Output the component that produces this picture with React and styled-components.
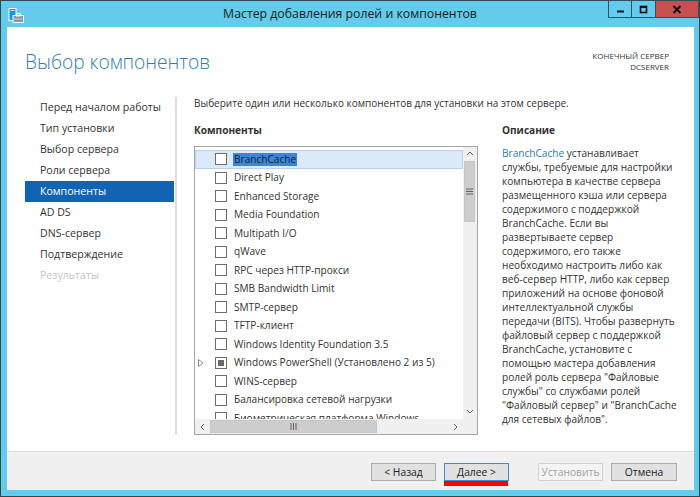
import React from 'react'
import styled, { createGlobalStyle } from 'styled-components'

const GlobalStyle = createGlobalStyle`
  html, body {
    margin: 0;
    padding: 0;
    background: #ffffff;
  }
  body {
    font-family: "Open Sans", "Noto Sans", sans-serif;
    color: #333;
  }
`

const Window = styled.div`
  width: 700px;
  height: 497px;
  box-sizing: border-box;
  border: 1px solid #34474f;
  background: #63cbeb;
  display: flex;
  flex-direction: column;
`

const TitleBar = styled.div`
  height: 26px;
  display: grid;
  grid-template-columns: 1fr auto 1fr;
  align-items: start;
`

const AppIcon = styled.div`
  justify-self: start;
  margin: 5px 0 0 7px;
  width: 16px;
  height: 15px;
`

const Title = styled.div`
  font-size: 12.3px;
  line-height: 26px;
  color: #1c1c1c;
  white-space: nowrap;
`

const Controls = styled.div`
  justify-self: end;
  display: flex;
  margin-top: -1px;
`

const ControlButton = styled.div`
  width: ${p => p.$w}px;
  height: 18px;
  box-sizing: border-box;
  border: 1px solid #35505d;
  border-left-width: ${p => (p.$first ? 1 : 0)}px;
  background: ${p => (p.$close ? '#c75050' : '#63cbeb')};
  display: flex;
  align-items: center;
  justify-content: center;
`

const Client = styled.div`
  flex: 1;
  margin: 0 5px 6px 6px;
  background: #ffffff;
  display: flex;
  flex-direction: column;
`

const Header = styled.div`
  height: 70px;
  box-sizing: border-box;
  padding: 22px 25px 0 18px;
  display: flex;
  justify-content: space-between;
  align-items: flex-start;
`

const Heading = styled.h1`
  margin: 0;
  font-size: 19.2px;
  line-height: 26px;
  font-weight: 300;
  color: #2f7db0;
`

const ServerInfo = styled.div`
  text-align: right;
  font-size: 8px;
  line-height: 11px;
  color: #333;
  margin-top: 1px;
`

const Body = styled.div`
  height: 338px;
  display: flex;
  margin-bottom: 16px;
`

const Nav = styled.ul`
  list-style: none;
  margin: 0 0 0 18px;
  padding: 0;
  width: 149px;
`

const NavItem = styled.li`
  height: 21px;
  line-height: 21px;
  padding-left: 15px;
  font-size: 10.6px;
  white-space: nowrap;
  color: ${p => (p.$active ? '#ffffff' : p.$disabled ? '#c4c4c4' : '#333')};
  background: ${p => (p.$active ? '#1064b3' : 'transparent')};
`

const Divider = styled.div`
  width: 2px;
  margin-left: 1px;
  background: #dcdcdc;
`

const Main = styled.div`
  margin-left: 17px;
  display: flex;
  flex-direction: column;
`

const Intro = styled.div`
  font-size: 10px;
  line-height: 12px;
  white-space: nowrap;
`

const Columns = styled.div`
  margin-top: 14px;
  display: flex;
  gap: 24px;
`

const Column = styled.div`
  width: ${p => p.$w}px;
  display: flex;
  flex-direction: column;
`

const SectionTitle = styled.div`
  font-size: 10.1px;
  font-weight: 700;
  line-height: 14px;
  margin-bottom: 9px;
  color: #333;
`

const ListBox = styled.div`
  height: 289px;
  box-sizing: border-box;
  border: 1px solid #a6a6a6;
  display: grid;
  grid-template-columns: 1fr 14px;
  grid-template-rows: 1fr 15px;
`

const Rows = styled.div`
  overflow: hidden;
  padding-top: 3px;
`

const Row = styled.div`
  height: 18.5px;
  display: flex;
  align-items: center;
  font-size: 10.1px;
  white-space: nowrap;
  color: #333;
  background: ${p => (p.$selected ? '#dbe9fa' : 'transparent')};
  box-shadow: ${p => (p.$selected ? 'inset 0 0 0 1px #b5d0f0' : 'none')};
`

const Expander = styled.div`
  width: 20px;
  height: 100%;
  display: flex;
  align-items: center;
  padding-left: 3px;
  box-sizing: border-box;
`

const Check = styled.div`
  width: 12px;
  height: 12px;
  box-sizing: border-box;
  border: 1px solid #6d6d6d;
  background: #fff;
  margin-right: 6px;
  display: flex;
  align-items: center;
  justify-content: center;
  &::after {
    content: '';
    display: ${p => (p.$partial ? 'block' : 'none')};
    width: 6px;
    height: 6px;
    background: #6a6a6a;
  }
`

const Label = styled.span`
  padding: 0 1px;
  line-height: 13px;
  background: ${p => (p.$focus ? '#3b86d6' : 'transparent')};
  color: ${p => (p.$focus ? '#0f2240' : 'inherit')};
`

const VScroll = styled.div`
  background: #f0f0f0;
  display: flex;
  flex-direction: column;
`

const HScroll = styled.div`
  background: #f0f0f0;
  display: flex;
`

const Corner = styled.div`
  background: #f0f0f0;
`

const Arrow = styled.div`
  width: ${p => (p.$h ? 15 : 14)}px;
  height: ${p => (p.$h ? 15 : 14)}px;
  flex: none;
  display: flex;
  align-items: center;
  justify-content: center;
`

const Track = styled.div`
  flex: 1;
  display: flex;
  flex-direction: ${p => (p.$h ? 'row' : 'column')};
`

const Thumb = styled.div`
  ${p => (p.$h ? 'width: 167px; height: 13px; margin-top: 1px;' : 'height: 61px; width: 11px; margin-left: 1px;')}
  background: #cdcdcd;
  box-sizing: border-box;
  border: 1px solid #c6c6c6;
  display: flex;
  align-items: center;
  justify-content: center;
`

const Description = styled.div`
  font-size: 10.1px;
  line-height: 14px;
  color: #333;
  white-space: nowrap;
`

const Link = styled.span`
  color: #2a7cbf;
`

const Footer = styled.div`
  flex: 1;
  border-top: 1px solid #dfdfdf;
  background: #f0f0f0;
  display: flex;
  justify-content: flex-end;
  align-items: flex-start;
  padding: 11px 17px 0 0;
  gap: 8px;
`

const Button = styled.div`
  position: relative;
  width: ${p => p.$w || 65}px;
  height: 18px;
  box-sizing: border-box;
  margin-left: ${p => p.$gap || 0}px;
  border: 1px solid ${p => (p.$default ? '#3c8ad8' : p.$disabled ? '#d3d3d3' : '#adadad')};
  background: ${p => (p.$disabled ? '#f4f4f4' : '#e1e1e1')};
  color: ${p => (p.$disabled ? '#a3a3a3' : '#222')};
  font-size: 10.3px;
  line-height: 16px;
  text-align: center;
  white-space: nowrap;
`

const Underline = styled.div`
  position: absolute;
  left: -1px;
  right: 0;
  top: calc(100% + 1px);
  height: 5px;
  background: #ff0000;
`

const components = [
  'BranchCache',
  'Direct Play',
  'Enhanced Storage',
  'Media Foundation',
  'Multipath I/O',
  'qWave',
  'RPC через HTTP-прокси',
  'SMB Bandwidth Limit',
  'SMTP-сервер',
  'TFTP-клиент',
  'Windows Identity Foundation 3.5',
  'Windows PowerShell (Установлено 2 из 5)',
  'WINS-сервер',
  'Балансировка сетевой нагрузки',
  'Биометрическая платформа Windows',
]

const steps = [
  'Перед началом работы',
  'Тип установки',
  'Выбор сервера',
  'Роли сервера',
  'Компоненты',
  'AD DS',
  'DNS-сервер',
  'Подтверждение',
  'Результаты',
]

const descLines = [
  'службы, требуемые для настройки',
  'компьютера в качестве сервера',
  'размещенного кэша или сервера',
  'содержимого с поддержкой',
  'BranchCache. Если вы',
  'развертываете сервер',
  'содержимого, его также',
  'необходимо настроить либо как',
  'веб-сервер HTTP, либо как сервер',
  'приложений на основе фоновой',
  'интеллектуальной службы',
  'передачи (BITS). Чтобы развернуть',
  'файловый сервер с поддержкой',
  'BranchCache, установите с',
  'помощью мастера добавления',
  'ролей роль сервера "Файловые',
  'службы" со службами ролей',
  '"Файловый сервер" и "BranchCache',
  'для сетевых файлов".',
]

const Chevron = ({ dir }) => {
  const paths = {
    up: 'M1 5 L4 2 L7 5',
    down: 'M1 2 L4 5 L7 2',
    left: 'M5 1 L2 4 L5 7',
    right: 'M2 1 L5 4 L2 7',
  }
  return (
    <svg width="8" height="8" viewBox="0 0 8 8">
      <path d={paths[dir]} fill="none" stroke="#606060" strokeWidth="1" />
    </svg>
  )
}

const Grip = ({ h }) =>
  h ? (
    <svg width="7" height="7" viewBox="0 0 7 7">
      <path d="M1 0V7M3.5 0V7M6 0V7" stroke="#606060" strokeWidth="1" />
    </svg>
  ) : (
    <svg width="7" height="7" viewBox="0 0 7 7">
      <path d="M0 1H7M0 3.5H7M0 6H7" stroke="#606060" strokeWidth="1" />
    </svg>
  )

export default function App() {
  return (
    <>
      <GlobalStyle />
      <Window>
        <TitleBar>
          <AppIcon>
            <svg width="16" height="15" viewBox="0 0 16 15">
              <rect x="1" y="0.5" width="7" height="12" fill="#1e8fd8" stroke="#ffffff" strokeWidth="1" />
              <rect x="2.5" y="2" width="4" height="1" fill="#bfe4f7" />
              <rect x="5" y="7.5" width="10.5" height="7" fill="#8597a6" stroke="#ffffff" strokeWidth="1" />
              <rect x="8.5" y="5.5" width="3.5" height="2.5" fill="none" stroke="#ffffff" strokeWidth="1" />
              <rect x="6" y="10.5" width="8.5" height="1" fill="#c7d1da" />
            </svg>
          </AppIcon>
          <Title>Мастер добавления ролей и компонентов</Title>
          <Controls>
            <ControlButton $w={24} $first>
              <svg width="9" height="9" viewBox="0 0 9 9">
                <rect x="1" y="5.5" width="7" height="2" fill="#111" />
              </svg>
            </ControlButton>
            <ControlButton $w={24}>
              <svg width="9" height="9" viewBox="0 0 9 9">
                <rect x="1.5" y="1.5" width="6" height="6" fill="none" stroke="#111" strokeWidth="1.6" />
                <rect x="1" y="1" width="7" height="2" fill="#111" />
              </svg>
            </ControlButton>
            <ControlButton $w={43} $close>
              <svg width="10" height="9" viewBox="0 0 10 9">
                <path d="M1.5 1 L8.5 8 M8.5 1 L1.5 8" stroke="#111" strokeWidth="2" />
              </svg>
            </ControlButton>
          </Controls>
        </TitleBar>

        <Client>
          <Header>
            <Heading>Выбор компонентов</Heading>
            <ServerInfo>
              КОНЕЧНЫЙ СЕРВЕР
              <br />
              DCSERVER
            </ServerInfo>
          </Header>

          <Body>
            <Nav>
              {steps.map((s, i) => (
                <NavItem key={s} $active={i === 4} $disabled={i === 8}>
                  {s}
                </NavItem>
              ))}
            </Nav>
            <Divider />
            <Main>
              <Intro>Выберите один или несколько компонентов для установки на этом сервере.</Intro>
              <Columns>
                <Column $w={284}>
                  <SectionTitle>Компоненты</SectionTitle>
                  <ListBox>
                    <Rows>
                      {components.map((c, i) => (
                        <Row key={c} $selected={i === 0}>
                          <Expander>
                            {i === 11 && (
                              <svg width="6" height="8" viewBox="0 0 6 8">
                                <path d="M0.5 0.5 L5 4 L0.5 7.5 Z" fill="#fff" stroke="#8a8a8a" strokeWidth="1" />
                              </svg>
                            )}
                          </Expander>
                          <Check $partial={i === 11} />
                          <Label $focus={i === 0}>{c}</Label>
                        </Row>
                      ))}
                    </Rows>
                    <VScroll>
                      <Arrow>
                        <Chevron dir="up" />
                      </Arrow>
                      <Track>
                        <Thumb>
                          <Grip />
                        </Thumb>
                      </Track>
                      <Arrow>
                        <Chevron dir="down" />
                      </Arrow>
                    </VScroll>
                    <HScroll>
                      <Arrow $h>
                        <Chevron dir="left" />
                      </Arrow>
                      <Track $h>
                        <Thumb $h>
                          <Grip h />
                        </Thumb>
                      </Track>
                      <Arrow $h>
                        <Chevron dir="right" />
                      </Arrow>
                    </HScroll>
                    <Corner />
                  </ListBox>
                </Column>
                <Column $w={175}>
                  <SectionTitle>Описание</SectionTitle>
                  <Description>
                    <Link>BranchCache</Link> устанавливает
                    {descLines.map(l => (
                      <React.Fragment key={l}>
                        <br />
                        {l}
                      </React.Fragment>
                    ))}
                  </Description>
                </Column>
              </Columns>
            </Main>
          </Body>

          <Footer>
            <Button>&lt; Назад</Button>
            <Button $default>
              Далее &gt;
              <Underline />
            </Button>
            <Button $disabled $gap={21}>Установить</Button>
            <Button $w={66}>Отмена</Button>
          </Footer>
        </Client>
      </Window>
    </>
  )
}
